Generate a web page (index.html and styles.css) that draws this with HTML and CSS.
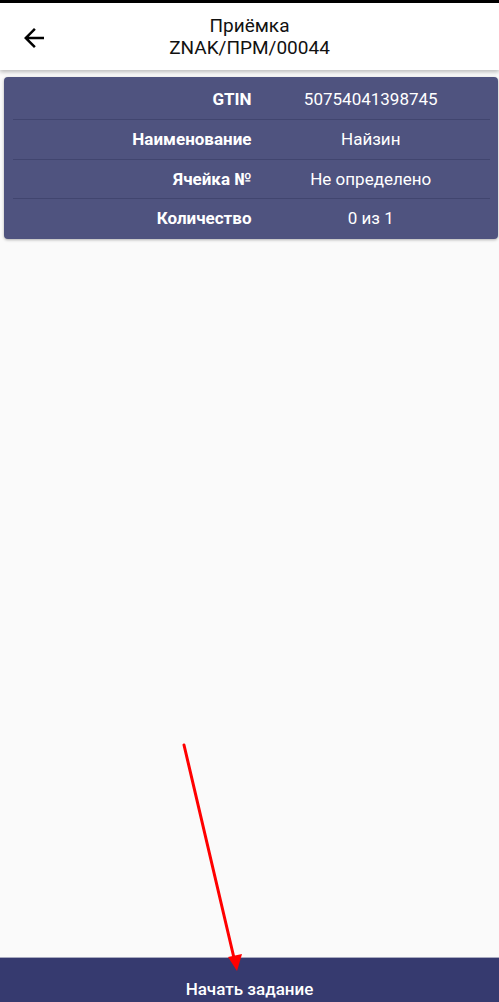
FILE: index.html
```html
<!DOCTYPE html>
<html>
<head>
    <title>Приёмка</title>
    <link rel="stylesheet" href="styles.css">
</head>
<body>
    <div class="statusbar"></div>
    <div class="header">
        <button class="back" aria-label="Назад">
            <svg width="30" height="30" viewBox="0 0 24 24"><path d="M20 11H7.83l5.59-5.59L12 4l-8 8 8 8 1.41-1.41L7.83 13H20v-2z" fill="#000"/></svg>
        </button>
        <div class="title">
            <div>Приёмка</div>
            <div>ZNAK/ПРМ/00044</div>
        </div>
    </div>

    <div class="content">
        <div class="card">
            <div class="row"><div class="label">GTIN</div><div class="value">50754041398745</div></div>
            <div class="row"><div class="label">Наименование</div><div class="value">Найзин</div></div>
            <div class="row"><div class="label">Ячейка №</div><div class="value">Не определено</div></div>
            <div class="row"><div class="label">Количество</div><div class="value">0 из 1</div></div>
        </div>
    </div>

    <button class="start">Начать задание</button>

    <svg class="pointer" width="499" height="1002" viewBox="0 0 499 1002">
        <line x1="184" y1="745" x2="234" y2="958" stroke="#ff0000" stroke-width="3" stroke-linecap="round"/>
        <polygon points="228,957 242,954 237,971" fill="#ff0000"/>
    </svg>
</body>
</html>
```

FILE: styles.css
```css
html, body { margin: 0; height: 100%; }
body { font-family: Roboto, "Noto Sans", sans-serif; background: #fafafa; display: flex; flex-direction: column; position: relative; overflow: hidden; }
.statusbar { height: 3px; background: #000; flex: none; }
.header { height: 67px; background: #fff; display: flex; align-items: center; position: relative; flex: none; box-shadow: 0 2px 4px rgba(0,0,0,0.25); z-index: 1; }
.back { background: none; border: none; padding: 0; width: 30px; height: 30px; margin-left: 19px; margin-top: 2px; cursor: pointer; }
.back svg { display: block; }
.title { position: absolute; left: 0; right: 0; top: 12px; text-align: center; font-size: 19px; line-height: 22px; color: #111; pointer-events: none; }
.content { flex: 1; padding: 7px 1px 0 4px; }
.card { background: #4f537f; border-radius: 4px; padding: 1px 8px 1px 9px; box-shadow: 0 1px 3px rgba(0,0,0,0.3); }
.row { display: flex; height: 38.5px; align-items: center; color: #fff; font-size: 17px; border-bottom: 1px solid #41456f; }
.row:first-child { height: 41px; }
.row:last-child { border-bottom: none; }
.label { flex: 1; text-align: right; font-weight: bold; }
.value { flex: 1; text-align: center; }
.start { flex: none; height: 45px; border: none; border-top: 1px solid #a9abc0; background: #363a6f; color: #fff; font-family: Roboto, sans-serif; font-size: 17px; font-weight: 500; padding-top: 18px; }
.pointer { position: absolute; left: 0; top: 0; pointer-events: none; z-index: 2; }
```
